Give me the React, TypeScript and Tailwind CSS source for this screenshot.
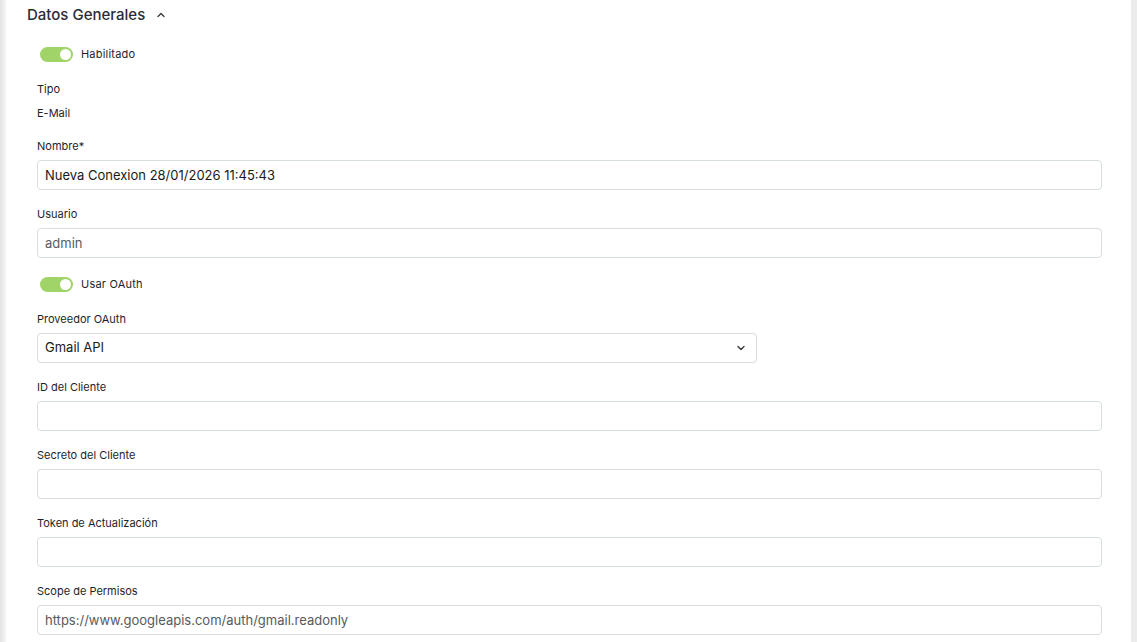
import React, { useState } from 'react';
import { ChevronUp, ChevronDown } from 'lucide-react';

const font = { fontFamily: 'Inter, "Open Sans", sans-serif' };

const Toggle = ({ on, label }: { on: boolean; label: string }) => (
  <div className="flex items-center h-[22px] pl-[3px]">
    <div className={`w-[33px] h-[15px] rounded-full flex items-center px-[2px] ${on ? 'bg-[#a0d468] justify-end' : 'bg-gray-300 justify-start'}`}>
      <div className="w-[11px] h-[11px] rounded-full bg-white" />
    </div>
    <span className="ml-[8px] text-[11px] text-[#1e1e2a] tracking-[0.2px]">{label}</span>
  </div>
);

const Field = ({ label, value, muted, wide = true }: { label: string; value?: string; muted?: boolean; wide?: boolean }) => (
  <div className="mb-[15px]">
    <div className="text-[11px] leading-[16px] pt-[1px] text-[#1e1e2a] mb-[6px]">{label}</div>
    <input
      readOnly
      value={value ?? ''}
      className={`h-[30px] ${wide ? 'w-[1065px]' : 'w-[720px]'} border border-[#d6dfdc] rounded-[4px] px-[7px] text-[13px] outline-none ${muted ? 'text-[#555b60]' : 'text-[#1a1a1a]'}`}
      style={font}
    />
  </div>
);

const App = () => {
  const [open] = useState(true);

  return (
    <div className="w-[1137px] h-[642px] overflow-hidden flex bg-white" style={font}>
      <div className="w-[6px] bg-gradient-to-r from-[#e4e4e4] to-[#f6f6f6]" />
      <div className="flex-1 bg-white">
        <div className="flex items-center h-[30px] pl-[21px]">
          <span className="text-[15px] text-[#2b2b38] font-medium">Datos Generales</span>
          <ChevronUp className="w-[12px] h-[12px] ml-[10px] text-[#333]" strokeWidth={2.5} />
        </div>
        {open && (
          <div className="pl-[31px] pt-[13px]">
            <Toggle on label="Habilitado" />
            <div className="mt-[16px] text-[11px] leading-[16px] text-[#1e1e2a]">Tipo</div>
            <div className="mt-[8px] text-[11px] leading-[16px] text-[#1e1e2a]">E-Mail</div>
            <div className="mt-[16px]">
              <Field label="Nombre*" value="Nueva Conexion 28/01/2026 11:45:43" />
              <Field label="Usuario" value="admin" muted />
            </div>
            <div className="mb-[15px]">
              <Toggle on label="Usar OAuth" />
            </div>
            <div className="mb-[15px]">
              <div className="text-[11px] leading-[16px] pt-[1px] text-[#1e1e2a] mb-[6px]">Proveedor OAuth</div>
              <div className="h-[30px] w-[720px] border border-[#d6dfdc] rounded-[4px] px-[7px] flex items-center justify-between text-[13px] text-[#1a1a1a]">
                <span>Gmail API</span>
                <ChevronDown className="w-[12px] h-[12px] mr-[2px] text-[#333]" strokeWidth={2.5} />
              </div>
            </div>
            <Field label="ID del Cliente" />
            <Field label="Secreto del Cliente" />
            <Field label="Token de Actualización" />
            <Field label="Scope de Permisos" value="https://www.googleapis.com/auth/gmail.readonly" muted />
          </div>
        )}
      </div>
      <div className="w-[6px] bg-[#ececec]" />
    </div>
  );
};

export default App;
